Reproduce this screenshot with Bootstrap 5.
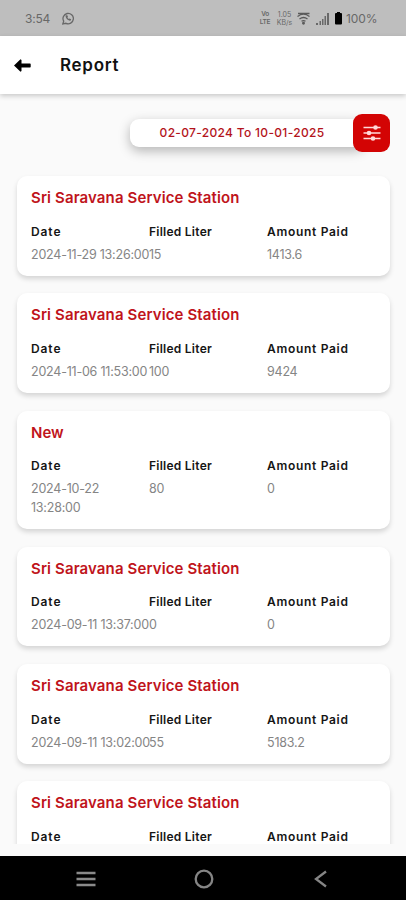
<!DOCTYPE html>
<html lang="en">
<head>
<meta charset="utf-8">
<meta name="viewport" content="width=device-width, initial-scale=1">
<title>Report</title>
<link href="https://cdn.jsdelivr.net/npm/bootstrap@5.3.0/dist/css/bootstrap.min.css" rel="stylesheet">
<style>
body{font-family:Inter,"Liberation Sans",sans-serif;background:#fafafa;height:900px;overflow:hidden}
.statusbar{height:36px;background:#bebebe;color:#686868;padding:1px 29px 0 25px;font-size:12px}
.clock{letter-spacing:-.2px;width:37px}
.battery{width:31px;margin-left:4px;letter-spacing:-.1px}
.gap-icon{margin-left:6px}
.rate{font-size:7px;width:17px}
.volte{font-size:6.5px;width:12px;font-weight:600;margin-right:5px;letter-spacing:-.3px}
.rate span,.volte span{line-height:7.500px;display:block;white-space:nowrap}
.appbar{height:58px;background:#fff;box-shadow:0 2px 5px rgba(0,0,0,.2);padding-left:14px;z-index:1}
.appbar h1{font-size:17px;font-weight:600;letter-spacing:.7px;margin-left:29px;color:#111}
.content{height:750px;overflow:hidden;padding:20px 16px 0 17px}
.range{width:235px;height:28px;margin-right:-12px;padding-right:11px;background:#fff;border-radius:9px;color:#b3131b;font-size:12px;font-weight:500;letter-spacing:.32px;box-shadow:0 4px 12px rgba(0,0,0,.28)}
.filter{width:37px;height:38px;border-radius:9px;background:#d30404;z-index:1}
.entries{margin-top:24px;gap:17.900px}
.entry{background:#fff;border-radius:10px;padding:11px 5px 11.500px 14px;box-shadow:0 3px 5px rgba(0,0,0,.15)}
.entry h2{font-size:15px;line-height:22px;font-weight:600;color:#c0141b;margin:0 0 13.500px}
.t-station{letter-spacing:.12px}
.entry dt{font-size:12px;line-height:18px;font-weight:600;color:#151515;letter-spacing:.25px;margin-bottom:5px}
.entry .when{letter-spacing:.9px}
.entry .paid{letter-spacing:.7px}
.entry dd{font-size:12.500px;line-height:18.500px;color:#858585;margin:0;letter-spacing:-.22px}
.entry .col-4{white-space:nowrap}
.sysnav{height:44px;margin-top:12px;background:#000;padding:2px 75px 0 76px}
</style>
</head>
<body class="d-flex flex-column">
<div class="statusbar d-flex align-items-center justify-content-between flex-shrink-0">
  <div class="d-flex align-items-center"><span class="clock">3:54</span>
    <svg width="12" height="13" viewBox="0 0 12 13" fill="none" stroke="#686868" stroke-width="1.300"><path d="M.8 12l.9-2.800A5.200 5.200 0 1 1 4 11.300z"/><path d="M3.700 3.300c-.8 2 2.300 6 5 5.300l.5-1.300-1.700-.9-.8.700-1.300-1.500.6-.8-.7-1.600z" fill="#686868" stroke="none"/></svg>
  </div>
  <div class="d-flex align-items-center">
    <div class="volte text-center"><span>Vo</span><span>LTE</span></div>
    <div class="rate text-center"><span>1.05</span><span>KB/s</span></div>
    <svg class="ms-1" width="13" height="13" viewBox="0 0 13 13" fill="none" stroke="#5a5a5a" stroke-width="1.300"><path d="M.5 4.500Q6.500-.3 12.500 4.500M2.500 7Q6.500 4 10.500 7M4.500 9.300Q6.500 8 8.500 9.300M1 1.500h11.500"/><circle cx="6.500" cy="11.300" r=".8" fill="#5a5a5a"/></svg>
    <svg class="gap-icon" width="13" height="12" viewBox="0 0 13 12" fill="#686868"><path d="M0 10h2v2H0zM3.500 8h1.500v4H3.500zM6 6h1.500v6H6zM8.500 3h1.500v9H8.500zM11 0h2v12h-2z"/></svg>
    <svg class="gap-icon" width="7" height="13" viewBox="0 0 7 13"><path d="M2 0h3v1h1a1 1 0 0 1 1 1v9.500a1 1 0 0 1-1 1H1a1 1 0 0 1-1-1V2a1 1 0 0 1 1-1h1z"/></svg>
    <span class="battery">100%</span>
  </div>
</div>
<header class="appbar d-flex align-items-center flex-shrink-0 position-relative">
  <svg width="17" height="13" viewBox="0 0 17 13"><path d="M0 6.500L6.500.3 7.500 1v3.500h8.500q.7 0 .7.7v2.600q0 .7-.7.7H7.500V12l-1 .7z"/></svg>
  <h1 class="mb-0">Report</h1>
</header>
<main class="content flex-shrink-0">
  <div class="d-flex justify-content-end align-items-center">
    <div class="range d-flex align-items-center justify-content-center"><span>02-07-2024 To 10-01-2025</span></div>
    <button class="filter btn p-0 border-0 d-flex align-items-center justify-content-center position-relative" aria-label="Filter"><svg width="18" height="18" viewBox="0 0 18 18" fill="none" stroke="#ffdada" stroke-width="1.500"><path d="M.5 3.500h17M.5 9h17M.5 14.500h17"/><g fill="#ffdada" stroke="none"><circle cx="12.500" cy="3.500" r="2.300"/><circle cx="6" cy="9" r="2.300"/><circle cx="10" cy="14.500" r="2.300"/></g></svg></button>
  </div>
  <div class="entries d-flex flex-column">
    <article class="entry"><h2><span class="t-station">Sri Saravana Service Station</span></h2>
      <dl class="row g-0 mb-0"><div class="col-4"><dt class="when">Date</dt><dd>2024-11-29 13:26:00</dd></div><div class="col-4"><dt>Filled Liter</dt><dd>15</dd></div><div class="col-4"><dt class="paid">Amount Paid</dt><dd>1413.6</dd></div></dl></article>
    <article class="entry"><h2><span class="t-station">Sri Saravana Service Station</span></h2>
      <dl class="row g-0 mb-0"><div class="col-4"><dt class="when">Date</dt><dd>2024-11-06 11:53:00</dd></div><div class="col-4"><dt>Filled Liter</dt><dd>100</dd></div><div class="col-4"><dt class="paid">Amount Paid</dt><dd>9424</dd></div></dl></article>
    <article class="entry"><h2>New</h2>
      <dl class="row g-0 mb-0"><div class="col-4"><dt class="when">Date</dt><dd>2024-10-22<br>13:28:00</dd></div><div class="col-4"><dt>Filled Liter</dt><dd>80</dd></div><div class="col-4"><dt class="paid">Amount Paid</dt><dd>0</dd></div></dl></article>
    <article class="entry"><h2><span class="t-station">Sri Saravana Service Station</span></h2>
      <dl class="row g-0 mb-0"><div class="col-4"><dt class="when">Date</dt><dd>2024-09-11 13:37:00</dd></div><div class="col-4"><dt>Filled Liter</dt><dd>0</dd></div><div class="col-4"><dt class="paid">Amount Paid</dt><dd>0</dd></div></dl></article>
    <article class="entry"><h2><span class="t-station">Sri Saravana Service Station</span></h2>
      <dl class="row g-0 mb-0"><div class="col-4"><dt class="when">Date</dt><dd>2024-09-11 13:02:00</dd></div><div class="col-4"><dt>Filled Liter</dt><dd>55</dd></div><div class="col-4"><dt class="paid">Amount Paid</dt><dd>5183.2</dd></div></dl></article>
    <article class="entry"><h2><span class="t-station">Sri Saravana Service Station</span></h2>
      <dl class="row g-0 mb-0"><div class="col-4"><dt class="when">Date</dt></div><div class="col-4"><dt>Filled Liter</dt></div><div class="col-4"><dt class="paid">Amount Paid</dt></div></dl></article>
  </div>
</main>
<nav class="sysnav flex-shrink-0 d-flex align-items-center justify-content-between">
  <svg width="20" height="20" viewBox="0 0 20 20" stroke="#8a8a8a" stroke-width="2.400"><path d="M.5 4h19M.5 10h19M.5 16h19"/></svg>
  <svg width="20" height="20" viewBox="0 0 20 20" fill="none" stroke="#858585" stroke-width="2.300"><circle cx="10" cy="10" r="8.300"/></svg>
  <svg width="20" height="20" viewBox="0 0 20 20" fill="none" stroke="#858585" stroke-width="2.300"><path d="M15 2.500L5 10l10 7.500"/></svg>
</nav>
<script src="https://cdn.jsdelivr.net/npm/bootstrap@5.3.0/dist/js/bootstrap.bundle.min.js"></script>
</body>
</html>
